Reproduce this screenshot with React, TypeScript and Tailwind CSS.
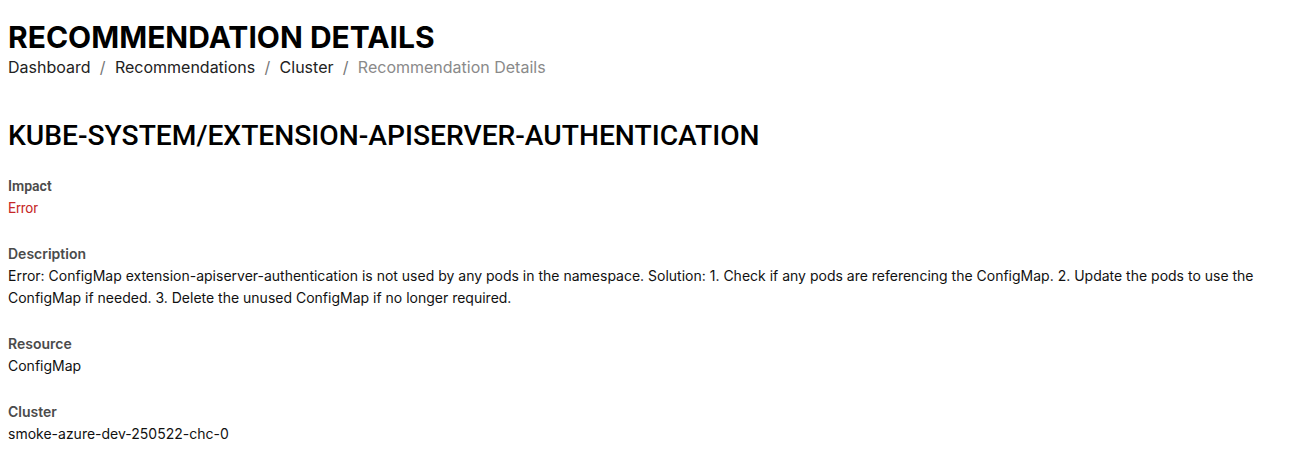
import React from 'react'

const crumbs = ['Dashboard', 'Recommendations', 'Cluster']

function Field({ label, children, labelFont }: { label: string; children: React.ReactNode; labelFont?: string }) {
  return (
    <div className="flex flex-col">
      <span className={`text-[14px] leading-[22px] font-semibold text-[#4b4b4b] ${labelFont ?? ''}`}>{label}</span>
      {children}
    </div>
  )
}

export default function App() {
  return (
    <div className="bg-white min-h-[455px] px-2 pt-[19px] text-black font-['Inter',sans-serif]">
      <h1 className="text-[30px] leading-[36px] font-bold">RECOMMENDATION DETAILS</h1>
      <nav className="flex items-center gap-[9.3px] text-[16px] leading-[24px] text-[#222]">
        {crumbs.map((c) => (
          <React.Fragment key={c}>
            <span>{c}</span>
            <span className="text-[#777]">/</span>
          </React.Fragment>
        ))}
        <span className="text-[#8a8a8a]">Recommendation Details</span>
      </nav>

      <h2 className="mt-[39px] text-[28.2px] leading-[36px] font-medium font-['Roboto',sans-serif]">
        KUBE-SYSTEM/EXTENSION-APISERVER-AUTHENTICATION
      </h2>

      <div className="mt-[21px] flex flex-col gap-[24px]">
        <Field label="Impact" labelFont="font-['Roboto',sans-serif] font-medium">
          <span className="text-[14px] leading-[22px] text-[#c62828] font-['Roboto',sans-serif]">Error</span>
        </Field>
        <Field label="Description">
          <p className="text-[14px] leading-[22px] text-[#111]">
            Error: ConfigMap extension-apiserver-authentication is not used by any pods in the namespace. Solution: 1. Check if any pods are referencing the ConfigMap. 2. Update the pods to use the ConfigMap if needed. 3. Delete the unused ConfigMap if no longer required.
          </p>
        </Field>
        <Field label="Resource">
          <span className="text-[14px] leading-[22px] text-[#111]">ConfigMap</span>
        </Field>
        <Field label="Cluster">
          <span className="text-[14px] leading-[22px] text-[#111]">smoke-azure-dev-250522-chc-0</span>
        </Field>
      </div>
    </div>
  )
}
